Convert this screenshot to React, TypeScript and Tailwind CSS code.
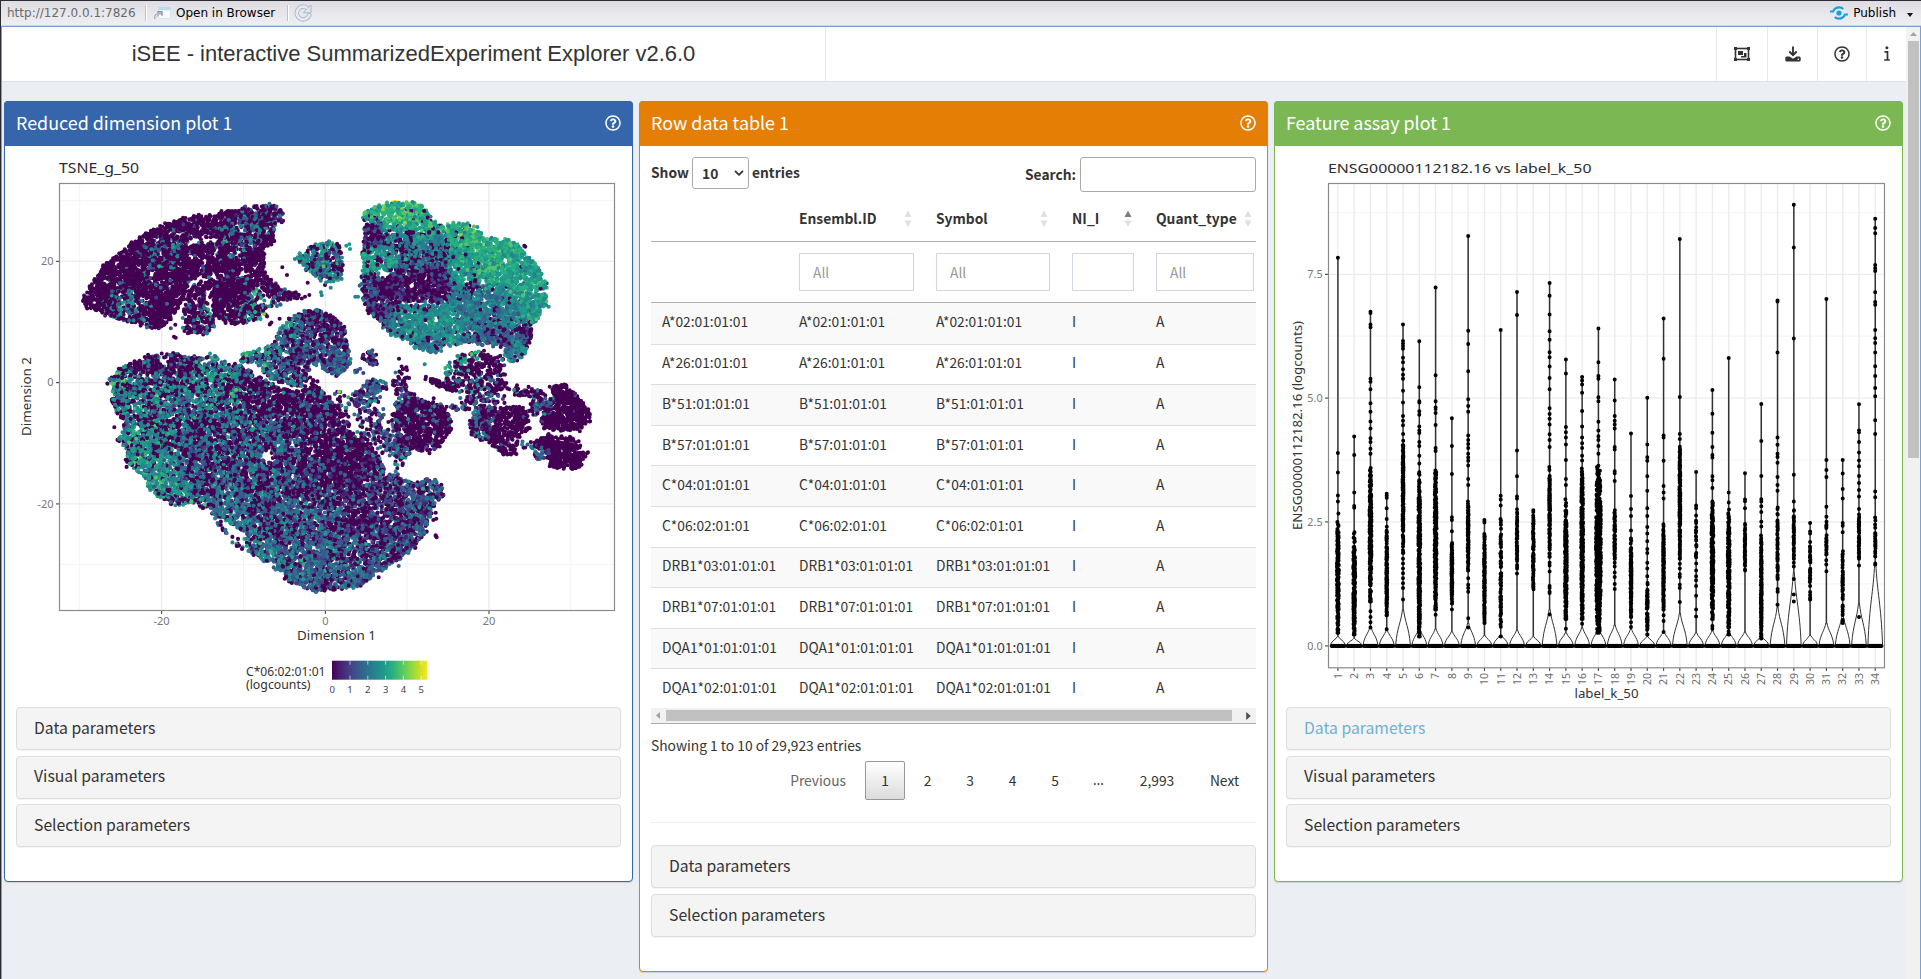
import React from "react";
import { FaRegObjectGroup, FaDownload, FaRegQuestionCircle, FaInfo } from "react-icons/fa";

/* ---------- deterministic random numbers ---------- */
function makeRng(seed: number) {
  let s = seed >>> 0;
  return () => {
    s = (s + 0x6d2b79f5) >>> 0;
    let t = s;
    t = Math.imul(t ^ (t >>> 15), t | 1);
    t ^= t + Math.imul(t ^ (t >>> 7), t | 61);
    return ((t ^ (t >>> 14)) >>> 0) / 4294967296;
  };
}

/* ---------- t-SNE scatter ---------- */
const VIRIDIS = [
  "#440154", "#482173", "#433e85", "#38598c", "#2d708e", "#25858e",
  "#1e9b8a", "#2ab07f", "#52c569", "#86d549", "#c2df23", "#fde725",
];

type Pt = [number, number];
// x, y, radius, share of zero counts, mean of the rest
type Spot = [number, number, number, number, number];
interface Cluster {
  poly: Pt[];
  density: number;
  spots: Spot[];
  holes?: [number, number, number, number][];
  sd?: number;
}

const CLUSTERS: Cluster[] = [
  {
    poly: [[38,330],[62,285],[110,215],[165,180],[230,125],[280,105],[370,77],[430,74],[520,52],[590,47],[628,48],[645,90],[612,100],[612,160],[582,170],[585,210],[580,240],[600,270],[640,300],[685,308],[690,325],[650,330],[600,322],[570,290],[545,290],[545,330],[575,345],[560,385],[520,400],[465,400],[432,370],[415,300],[395,250],[360,268],[345,310],[330,350],[305,390],[255,420],[215,405],[180,395],[135,385],[80,362],[50,355]],
    density: 32,
    spots: [[300,250,150,0.95,1.8],[100,280,60,0.99,1.8],[260,380,40,0.97,1.8],[480,320,45,0.97,1.8],[170,345,40,0.2,2.5],[280,205,40,0.35,2.1],[520,140,42,0.45,2.1],[340,150,34,0.6,2.2],[440,130,30,0.6,2],[555,350,40,0.55,2.7],[490,260,24,0.75,2],[230,270,20,0.6,2.2],[620,70,24,0.45,1.5],[580,100,20,0.6,1.8],[420,60,60,0.99,1],[600,250,80,0.93,1.5]],
    holes: [[405,150,36,9],[350,160,30,7],[495,190,14,9],[245,250,9,12],[210,300,5,12],[530,250,18,6],[430,260,10,8],[330,130,10,6]],
  },
  { poly: [[345,345],[365,290],[400,270],[412,350],[440,395],[425,425],[400,433],[345,425],[335,390]], density: 20, spots: [[380,360,60,0.92,2],[425,420,14,0.4,2.4]] },
  { poly: [[285,405],[340,400],[345,420],[300,418]], density: 7, spots: [[300,410,60,0.6,2]] },
  { poly: [[545,290],[600,320],[640,345],[600,360],[560,400],[530,340]], density: 10, spots: [[580,340,60,0.45,2.7]] },
  { poly: [[560,375],[650,378],[625,410],[575,400]], density: 3, spots: [[600,390,60,0.7,2.4]] },
  { poly: [[675,205],[700,182],[730,165],[775,155],[812,162],[820,225],[815,265],[788,282],[755,270],[725,250],[700,232]], density: 28, spots: [[740,190,50,0.15,2.3],[805,200,25,0.7,1.6],[770,250,40,0.3,2.1],[770,160,20,0.1,3]] },
  { poly: [[620,430],[640,395],[690,367],[740,357],[790,380],[825,415],[835,470],[835,500],[848,515],[820,545],[795,560],[750,530],[720,510],[715,560],[690,590],[640,585],[590,560],[560,515],[505,520],[520,490],[560,480],[610,464]], density: 27, spots: [[660,410,35,0.3,2.5],[740,400,40,0.55,1.4],[800,430,40,0.55,1.3],[700,470,50,0.45,1.6],[790,510,40,0.25,1.6],[560,500,50,0.25,2.7],[640,520,60,0.45,2]], holes: [[565,540,14,12]] },
  {
    poly: [[115,580],[135,542],[200,512],[240,497],[305,490],[365,502],[430,495],[470,520],[520,530],[560,555],[620,590],[690,605],[740,585],[765,615],[800,640],[830,690],[860,740],[900,765],[930,810],[950,850],[1000,862],[1030,880],[1070,870],[1100,872],[1128,915],[1095,940],[1080,980],[1060,1045],[1020,1090],[985,1112],[940,1140],[900,1170],[860,1190],[810,1200],[740,1205],[700,1192],[650,1168],[600,1125],[545,1088],[520,1050],[540,1040],[480,1000],[450,985],[380,940],[300,945],[240,900],[225,860],[165,825],[170,780],[145,750],[165,700],[125,640],[130,610]],
    density: 29,
    spots: [[150,560,50,0.35,3.1],[240,530,60,0.65,2],[330,500,45,0.75,1.8],[200,640,70,0.45,2.4],[220,730,55,0.3,2.8],[380,600,60,0.28,2.6],[330,700,70,0.4,2.2],[190,790,40,0.25,3],[265,840,50,0.12,2.6],[320,920,45,0.2,2.7],[400,840,60,0.55,1.7],[500,720,60,0.4,2],[600,620,50,0.78,1.7],[700,620,60,0.7,1.7],[620,740,70,0.5,1.7],[800,750,70,0.8,1.4],[540,840,60,0.5,1.8],[480,950,50,0.2,2.1],[640,900,60,0.35,1.8],[700,1010,70,0.28,1.8],[580,1010,40,0.3,2],[580,970,25,0.75,1.5],[700,880,40,0.75,1.4],[860,860,50,0.6,1.2],[970,980,55,0.7,1.2],[990,900,60,0.3,1.5],[860,980,50,0.65,1.3],[620,1090,60,0.2,2],[720,1120,60,0.22,1.7],[860,1100,60,0.35,1.6],[860,1165,50,0.2,1.8],[770,1190,25,0.7,1.2],[1040,1050,50,0.3,1.6],[1090,910,40,0.3,1.6]],
    holes: [[595,800,13,16],[430,512,30,6],[590,660,8,5]],
  },
  { poly: [[410,970],[470,985],[480,1040],[550,1060],[540,1090],[500,1070],[465,1030]], density: 5, spots: [[480,1020,80,0.35,2.3]] },
  {
    poly: [[880,68],[915,50],[980,36],[1050,42],[1078,72],[1110,105],[1170,97],[1220,110],[1245,145],[1310,145],[1350,162],[1362,195],[1380,207],[1415,245],[1432,290],[1425,350],[1410,380],[1385,405],[1383,450],[1365,495],[1320,520],[1305,500],[1290,465],[1200,458],[1140,463],[1105,485],[1060,485],[1010,455],[955,430],[930,400],[895,365],[875,320],[870,270],[880,220],[875,190],[885,150],[880,110]],
    density: 31,
    sd: 0.42,
    spots: [[980,80,45,0.03,3.4],[910,130,22,0.65,1],[1000,150,28,0.4,1.9],[1070,120,30,0.08,3],[1110,175,30,0.35,2.1],[1170,140,40,0.05,3.3],[1270,200,60,0.02,3.15],[1190,230,35,0.06,2.9],[1360,280,50,0.02,3],[1370,360,40,0.02,2.8],[930,215,28,0.12,2.9],[1060,210,35,0.4,2.1],[890,300,22,0.35,1.5],[960,300,32,0.75,0.9],[1080,285,38,0.75,0.8],[1210,293,14,0.75,1],[1200,345,45,0.1,2.2],[1280,360,45,0.1,2],[930,370,22,0.45,1.2],[1050,400,40,0.08,2.6],[1000,410,30,0.12,2.4],[1130,400,40,0.05,2.7],[1370,430,20,0.7,1.2],[1290,440,30,0.25,1.6],[1220,430,30,0.2,1.7],[1340,490,22,0.25,2.6],[1080,465,25,0.1,2]],
    holes: [[937,254,22,10],[1040,340,50,6],[1100,390,8,5]],
  },
  { poly: [[1125,520],[1170,492],[1230,480],[1300,500],[1312,560],[1300,620],[1260,615],[1200,610],[1150,600],[1130,570]], density: 17, spots: [[1150,520,24,0.15,2.8],[1200,500,25,0.45,3.2],[1280,560,50,0.85,1.6],[1220,600,40,0.55,2.4],[1210,560,30,0.85,2]] },
  { poly: [[1063,560],[1075,562],[1155,592],[1150,605],[1070,572]], density: 50, spots: [[1100,580,100,1,1]] },
  { poly: [[1170,620],[1300,610],[1320,635],[1200,660],[1180,655]], density: 12, spots: [[1250,630,100,0.7,1.6]] },
  { poly: [[1120,648],[1180,645],[1200,670],[1140,656]], density: 10, spots: [[1250,630,100,0.8,1.6]] },
  { poly: [[1200,680],[1230,650],[1300,655],[1350,648],[1382,690],[1380,725],[1345,740],[1338,790],[1300,798],[1285,780],[1250,752],[1200,738]], density: 26, spots: [[1230,690,35,0.55,1.7],[1330,700,50,0.96,1.5],[1310,770,40,0.97,1]] },
  { poly: [[1442,590],[1485,582],[1520,618],[1560,665],[1562,690],[1530,720],[1480,722],[1420,718],[1412,690],[1425,640],[1455,620]], density: 36, spots: [[1500,670,60,0.99,1],[1430,650,26,0.6,1.8]] },
  { poly: [[1385,765],[1420,735],[1490,740],[1520,750],[1545,795],[1535,825],[1510,838],[1445,835],[1430,812],[1400,805]], density: 36, spots: [[1500,780,60,0.99,1],[1405,790,22,0.5,1.8]] },
  { poly: [[1310,598],[1370,585],[1420,608],[1440,640],[1400,680],[1370,665],[1385,625],[1330,615]], density: 18, spots: [[1360,600,60,0.9,1.6],[1400,660,25,0.4,1.9]] },
  { poly: [[1335,740],[1385,745],[1390,780],[1350,770]], density: 9, spots: [[1360,760,60,0.5,1.8]] },
  { poly: [[975,640],[1010,622],[1060,632],[1110,642],[1138,670],[1143,710],[1125,760],[1080,785],[1020,775],[980,740],[965,700]], density: 28, spots: [[1060,700,60,0.85,1.5],[990,700,30,0.7,1.5]] },
  { poly: [[940,730],[1000,735],[1030,790],[990,812],[950,795]], density: 20, spots: [[980,770,60,0.35,1.4]] },
  { poly: [[975,805],[1000,820],[985,855],[970,850]], density: 5, spots: [[980,830,60,0.6,1.8]] },
  { poly: [[850,610],[900,572],[930,585],[928,630],[880,665],[850,645]], density: 24, spots: [[880,625,60,0.2,1.3]] },
  { poly: [[900,565],[960,575],[970,590],[930,605]], density: 14, spots: [[930,580,60,0.4,1.9]] },
  { poly: [[870,500],[916,475],[925,530],[895,522]], density: 24, spots: [[900,505,60,0.5,1]] },
  { poly: [[845,540],[880,530],[882,560],[860,552]], density: 14, spots: [[870,545,60,0.2,1.4]] },
  { poly: [[965,550],[1000,520],[1032,515],[990,565]], density: 13, spots: [[1000,540,60,0.8,1.4]] },
  { poly: [[965,570],[1020,562],[1005,590],[1050,635],[1000,640],[975,610]], density: 15, spots: [[1000,600,60,0.55,1.5]] },
  { poly: [[870,650],[930,640],[960,720],[950,800],[900,780],[850,720]], density: 9, spots: [[900,720,60,0.5,1.5]] },
  { poly: [[890,690],[935,700],[930,725],[905,720]], density: 16, spots: [[900,700,60,0.2,1.4]] },
  { poly: [[795,590],[850,620],[860,690],[830,690],[790,640]], density: 6, spots: [[830,640,60,0.6,1.7]] },
  { poly: [[690,585],[720,550],[750,560],[740,590]], density: 8, spots: [[720,580,60,0.7,1.5]] },
];

const STRAY: [number, number, number][] = [
  [637,232,0],[651,255,0],[713,278,0],[705,320,0],[753,307,5],[755,316,5],[718,315,0],[312,440,0],[317,443,0],[838,163,6],[840,177,6],[829,167,6],
  [765,285,0],[782,293,5],[856,320,5],[864,320,5],[1436,350,6],[1430,280,2],[1366,170,0],[1363,167,0],[1097,1038,0],[1100,1042,0],[1097,1036,0],
  [1097,968,0],[1099,986,0],[1090,990,0],[1551,790,0],[1554,787,0],[987,506,0],[987,625,0],[1064,523,5],[1091,625,0],[986,1128,3],[926,1162,0],
  [500,1068,0],[516,1077,0],[470,1030,5],[133,712,0],[978,35,11],[972,35,11],[807,605,9],[835,622,7],[983,825,7],[982,835,0],[115,582,10],
];

function inside(p: Pt[], x: number, y: number) {
  let hit = false;
  for (let i = 0, j = p.length - 1; i < p.length; j = i++) {
    const [xi, yi] = p[i];
    const [xj, yj] = p[j];
    if (yi > y !== yj > y && x < ((xj - xi) * (y - yi)) / (yj - yi) + xi) hit = !hit;
  }
  return hit;
}

function buildScatter() {
  const rng = makeRng(2024);
  const gauss = () => (rng() + rng() + rng() + rng() - 2) * 1.73;
  const layers = 24;
  const bins: string[][] = Array.from({ length: layers }, () => VIRIDIS.map(() => ""));
  const put = (ux: number, uy: number, c: number) => {
    const l = Math.floor(rng() * layers);
    bins[l][c] += `M${(70 + ux / 3).toFixed(1)} ${(190 + uy / 3).toFixed(1)}h0`;
  };
  for (const c of CLUSTERS) {
    const xs = c.poly.map((p) => p[0]);
    const ys = c.poly.map((p) => p[1]);
    const x0 = Math.min(...xs), x1 = Math.max(...xs), y0 = Math.min(...ys), y1 = Math.max(...ys);
    const n = Math.round(((x1 - x0) * (y1 - y0) * c.density) / 1000);
    for (let i = 0; i < n; i++) {
      const x = x0 + rng() * (x1 - x0);
      const y = y0 + rng() * (y1 - y0);
      if (!inside(c.poly, x, y)) continue;
      if (c.holes && c.holes.some(([hx, hy, hw, hh]) => ((x - hx) / hw) ** 2 + ((y - hy) / hh) ** 2 < 1.3 && rng() < 0.93)) continue;
      let w = 0, p0 = 0, m = 0;
      for (const [sx, sy, r, sp, sm] of c.spots) {
        const d2 = ((x - sx) ** 2 + (y - sy) ** 2) / (r * r);
        const k = Math.exp(-d2 * 0.9) + 1e-4 / (1 + d2);
        w += k; p0 += k * sp; m += k * sm;
      }
      p0 /= w; m /= w;
      const patch = Math.sin(x / 17 + Math.sin(y / 23) * 2) * Math.sin(y / 14 + Math.sin(x / 19) * 2);
      if (p0 > 0.15 && p0 < 0.93) p0 += patch * 0.16;
      let v = 0;
      if (rng() >= p0) v = Math.max(0.3, m + gauss() * (c.sd ?? 0.6));
      const bin = Math.max(0, Math.min(11, Math.round((v / 5.3) * 11)));
      put(x + gauss() * 2.4, y + gauss() * 2.4, bin);
    }
  }
  STRAY.forEach(([x, y, c]) => put(x, y, c));
  return bins;
}

const SCATTER = buildScatter();
const X1_MINOR = [79.7, 243.5, 407.2, 570.8];
const X1_MAJOR: [number, string][] = [[161.6, "-20"], [325.4, "0"], [489, "20"]];
const Y1_MINOR = [200.7, 321.9, 443, 564.3];
const Y1_MAJOR: [number, string][] = [[261.4, "20"], [382.6, "0"], [503.9, "-20"]];
const LEGEND = [332.3, 350, 367.8, 385.6, 403.4, 421.2];

const plotFont = "font-['Noto_Sans']";

function ReducedDimensionPlot() {
  return (
    <svg className={`block h-[561px] w-[605px] ${plotFont}`} viewBox="16 146 605 561">
      <defs>
        <linearGradient id="viridis">
          {VIRIDIS.map((c, i) => (
            <stop key={c} offset={i / 11} stopColor={c} />
          ))}
        </linearGradient>
      </defs>
      {X1_MINOR.map((x) => <path key={x} d={`M${x} 183V611`} stroke="#f3f3f3" />)}
      {Y1_MINOR.map((y) => <path key={y} d={`M59 ${y}H615`} stroke="#f3f3f3" />)}
      {X1_MAJOR.map(([x]) => <path key={x} d={`M${x} 183V611`} stroke="#ececec" strokeWidth="1.4" />)}
      {Y1_MAJOR.map(([y]) => <path key={y} d={`M59 ${y}H615`} stroke="#ececec" strokeWidth="1.4" />)}
      <g fill="none" strokeLinecap="round" strokeWidth="4.1">
        {SCATTER.map((layer, i) => layer.map((d, j) => (d ? <path key={`${i}-${j}`} d={d} stroke={VIRIDIS[j]} /> : null)))}
      </g>
      <rect x="59.5" y="183.5" width="555" height="427" fill="none" stroke="#8a8a8a" strokeWidth="1.2" />
      <text x="59" y="173" fontSize="13.5" fill="#2b2b2b" textLength="80" lengthAdjust="spacingAndGlyphs">TSNE_g_50</text>
      {X1_MAJOR.map(([x, t]) => (
        <g key={t}>
          <path d={`M${x} 611V614`} stroke="#555" strokeWidth="1.2" />
          <text x={x} y="624.8" fontSize="11" fill="#777" textAnchor="middle">{t}</text>
        </g>
      ))}
      {Y1_MAJOR.map(([y, t]) => (
        <g key={t}>
          <path d={`M56 ${y}H59`} stroke="#555" strokeWidth="1.2" />
          <text x="53.5" y={y + 3.8} fontSize="11" fill="#777" textAnchor="end">{t}</text>
        </g>
      ))}
      <text x="297" y="640" fontSize="12.5" fill="#333" textLength="79" lengthAdjust="spacingAndGlyphs">Dimension 1</text>
      <text transform="translate(31 436) rotate(-90)" fontSize="12.5" fill="#333" textLength="79" lengthAdjust="spacingAndGlyphs">Dimension 2</text>
      <text y="676.3" fontSize="12.2" fill="#333">
        <tspan x="246" textLength="79.5" lengthAdjust="spacingAndGlyphs">C*06:02:01:01</tspan>
        <tspan x="246" dy="13" textLength="64.5" lengthAdjust="spacingAndGlyphs">(logcounts)</tspan>
      </text>
      <rect x="332" y="660.7" width="95.5" height="19" fill="url(#viridis)" />
      {LEGEND.map((x, i) => (
        <g key={x}>
          {i > 0 && <path d={`M${x} 660.7v4M${x} 675.7v4`} stroke="#fff" strokeOpacity="0.6" />}
          <text x={x} y="693" fontSize="9.5" fill="#444" textAnchor="middle">{i}</text>
        </g>
      ))}
    </svg>
  );
}

/* ---------- violin plot ---------- */
interface Violin {
  top: number;
  dots: number[];
  dense: [number, number];
  n: number;
  bulge: number;
}
const v = (top: number, dots: number[], dense: [number, number], n: number, bulge: number): Violin => ({ top, dots, dense, n, bulge });

const VIOLINS: Violin[] = [
  v(431, [933,983,1042,1058], [1085,1395], 170, 1405),
  v(891, [938,1035,1069,1074], [1125,1400], 150, 1410),
  v(570, [573,603,610,742,750,769,805,827,852,870,895,905,922,935,1340,1355,1368,1382], [945,1315], 200, 1380),
  v(1038, [1043,1048,1075,1103,1386], [1120,1350], 110, 1388),
  v(603, [645,652,658,665,688,700,718,732,742,773,803,838,850,862,1205,1217,1230,1242,1255,1268,1280,1310], [880,1190], 130, 1335),
  v(646, [764,800,803,826,835,865,875,882,905,915,940,960], [975,1405], 230, 1385),
  v(508, [733,800,816,820,830,861,920,928,1349], [955,1335], 210, 1385),
  v(844, [915,987,1098,1105,1134,1335], [1150,1320], 90, 1392),
  v(375, [619,653,723,795,812,827,888,900,910,920,935,945,953,965,1000,1015,1255,1272,1280,1290,1358,1382], [1050,1235], 90, 1370),
  v(1105, [1108,1112], [1120,1370], 90, 1402),
  v(617, [1043,1053,1068], [1080,1405], 75, 1400),
  v(519, [578,927,993,1045,1050,1243], [1070,1230], 55, 1388),
  v(1080, [1085], [1090,1285], 80, 1405),
  v(496, [529,577,620,642,674,687,711,740,769,818,833,845,860,885,900,918,1215,1222,1238,1275,1280,1290,1293,1348], [960,1200], 110, 1335),
  v(693, [729,866,880,893,911,951,1000,1015,1385], [1045,1360], 170, 1395),
  v(738, [747,757,778,825,865,893,908,920,940,952,1372], [960,1360], 200, 1382),
  v(613, [700,735,742,790,800,853,875,890,900,915,935], [945,1395], 360, 1385),
  v(744, [798,838,850,860,870,918,924,980,985,1005,1215,1225,1240,1252,1270,1283], [1075,1205], 75, 1375),
  v(883, [1044,1077,1095,1132,1368,1380], [1140,1355], 100, 1385),
  v(791, [911,944,953,993,1030,1075,1095,1123,1140,1160,1180,1190,1215,1230,1250], [1260,1400], 80, 1405),
  v(587, [691,888,893,953,1018,1035,1050,1350,1365,1393], [1105,1335], 120, 1392),
  v(383, [789,884,897,1218,1230,1245,1252,1272,1280,1316], [905,1205], 130, 1345),
  v(982, [1068,1075,1235,1250,1260,1275,1300,1335,1353], [1090,1220], 24, 1395),
  v(771, [832,881,918,938,945,993,1003,1023,1378,1385], [1040,1360], 170, 1390),
  v(689, [1035,1060], [1075,1400], 150, 1393),
  v(985, [1053,1057,1075], [1095,1235], 65, 1393),
  v(807, [902,992,1052,1058,1070,1085,1110,1122], [1135,1410], 140, 1405),
  v(541, [544,675,893,912,935,943,958,995,1015,1030,1323], [1040,1290], 60, 1330),
  v(295, [405,639,989,1058,1215,1225,1257,1297,1315], [1065,1205], 45, 1240),
  v(1113, [1135,1140,1162], [1165,1310], 45, 1402),
  v(537, [951,977,995,1071,1097,1237], [1100,1220], 30, 1370),
  v(951, [986,1026,1050,1113,1120,1137], [1160,1370], 60, 1350),
  v(808, [875,880,905,932,952,967,992,1010,1028,1045,1222,1355], [1055,1205], 50, 1320),
  v(331, [355,368,450,458,465,520,545,552,617,638,650,675,710,735,766,787,849,884,1032,1047], [1070,1220], 32, 1215),
];

const cy = (y: number) => 90 + y / 2.5705;
const cx = (i: number) => 1337.9 + i * 16.283;
const BASE = 645.9;

function buildViolins() {
  const rng = makeRng(77);
  let dots = "";
  let wide = "";
  VIOLINS.forEach((w, i) => {
    const x = cx(i);
    [w.top, ...w.dots].forEach((y) => {
      dots += `M${x.toFixed(1)} ${cy(y).toFixed(1)}h0`;
    });
    const spread = w.n > 300 ? 2.6 : w.n > 140 ? 1 : w.n > 70 ? 0.5 : 0.3;
    const count = w.n > 85 ? w.n * 1.6 : w.n;
    for (let k = 0; k < count; k++) {
      const t = (rng() + rng() * 0.55) / 1.55;
      // flip so that low values are the crowded end
      const u = 1 - Math.pow(1 - t, 0.85);
      const y = w.dense[0] + (w.dense[1] - w.dense[0]) * Math.min(1, u * 1.22);
      const bell = Math.sin(Math.PI * (0.15 + 0.7 * Math.min(1, u * 1.2)));
      const dx = (rng() - 0.5) * 2 * spread * bell;
      wide += `M${(x + dx).toFixed(1)} ${cy(y).toFixed(1)}h0`;
    }
  });
  return dots + wide;
}
const VIOLIN_DOTS = buildViolins();
const Y2: [number, string][] = [[645.9, "0.0"], [521.9, "2.5"], [398.1, "5.0"], [274.4, "7.5"]];

function violinPath(i: number, bulge: number) {
  const x = cx(i);
  const t = cy(bulge);
  const b = BASE - 1.5;
  const h = b - t;
  return `M${x - 7.3} ${b}C${x - 5.8} ${b - h * 0.5} ${x - 2} ${b - h * 0.62} ${x - 0.5} ${t}H${x + 0.5}C${x + 2} ${b - h * 0.62} ${x + 5.8} ${b - h * 0.5} ${x + 7.3} ${b}Z`;
}

function FeatureAssayPlot() {
  return (
    <svg className={`block h-[561px] w-[605px] ${plotFont}`} viewBox="1286 146 605 561">
      {[212.6, 336.2, 460, 583.9].map((y) => <path key={y} d={`M1328 ${y}H1884`} stroke="#f3f3f3" />)}
      {Y2.map(([y]) => <path key={y} d={`M1328 ${y}H1884`} stroke="#ececec" strokeWidth="1.4" />)}
      {VIOLINS.map((_, i) => <path key={i} d={`M${cx(i)} 183V668`} stroke="#ececec" strokeWidth="1.4" />)}
      {VIOLINS.map((w, i) => (
        <g key={i} stroke="#333">
          <path d={`M${cx(i)} ${cy(w.top)}V${cy(w.bulge) + 1}`} strokeWidth="1.5" />
          <path d={violinPath(i, w.bulge)} fill="#fff" strokeWidth="1" />
          <path d={`M${cx(i) - 6.2} ${BASE}h12.4`} stroke="#000" strokeWidth="4" strokeLinecap="round" />
        </g>
      ))}
      <path d={`M1332 ${BASE}H1881`} stroke="#000" strokeWidth="3" />
      <path d={VIOLIN_DOTS} fill="none" stroke="#000" strokeWidth="4" strokeLinecap="round" />
      <rect x="1328.5" y="183.5" width="556" height="484.3" fill="none" stroke="#8a8a8a" strokeWidth="1.2" />
      <text x="1328" y="173" fontSize="13.3" fill="#2b2b2b" textLength="263.5" lengthAdjust="spacingAndGlyphs">ENSG00000112182.16 vs label_k_50</text>
      {Y2.map(([y, t]) => (
        <g key={t}>
          <path d={`M1325 ${y}H1328`} stroke="#555" strokeWidth="1.2" />
          <text x="1322.6" y={y + 3.8} fontSize="10.8" fill="#777" textAnchor="end">{t}</text>
        </g>
      ))}
      {VIOLINS.map((_, i) => (
        <g key={i}>
          <path d={`M${cx(i)} 668V671`} stroke="#555" strokeWidth="1.2" />
          <text transform={`translate(${cx(i) + 3.8} 673) rotate(-90)`} fontSize="10.5" fill="#6b6b6b" textAnchor="end">{i + 1}</text>
        </g>
      ))}
      <text transform="translate(1301.5 530) rotate(-90)" fontSize="12.5" fill="#333" textLength="209" lengthAdjust="spacingAndGlyphs">ENSG00000112182.16 (logcounts)</text>
      <text x="1574.5" y="697.8" fontSize="12.5" fill="#333" textLength="64" lengthAdjust="spacingAndGlyphs">label_k_50</text>
    </svg>
  );
}

/* ---------- panels ---------- */
function Panel({ title, frame, head, height, children }: { title: string; frame: string; head: string; height: string; children: React.ReactNode }) {
  return (
    <section className={`w-[629px] shrink-0 rounded-[4px] border bg-white shadow-[0_1px_1px_rgba(0,0,0,0.12)] ${frame} ${height}`}>
      <header className={`-mx-px -mt-px flex h-[45px] items-center justify-between rounded-t-[4px] px-[12px] text-white ${head}`}>
        <h3 className="pb-[4px] text-[17.9px] leading-[22px]">{title}</h3>
        <FaRegQuestionCircle className="mb-px size-4" />
      </header>
      <div className="px-[11px]">{children}</div>
    </section>
  );
}

function Collapsible({ label, active }: { label: string; active?: boolean }) {
  return (
    <div className={`flex h-[43px] items-center rounded-[4px] border border-[#dddddd] bg-[#f4f4f4] pb-[2px] pl-[17px] text-[15.75px] leading-5 shadow-[0_1px_1px_rgba(0,0,0,0.05)] ${active ? "text-[#72afd2]" : "text-[#333]"}`}>
      {label}
    </div>
  );
}

const ALLELES = [
  "A*02:01:01:01", "A*26:01:01:01", "B*51:01:01:01", "B*57:01:01:01", "C*04:01:01:01",
  "C*06:02:01:01", "DRB1*03:01:01:01", "DRB1*07:01:01:01", "DQA1*01:01:01:01", "DQA1*02:01:01:01",
];

function Sorter({ up }: { up?: boolean }) {
  return (
    <svg className="h-[18px] w-[8px]" viewBox="0 0 8 18">
      <path d="M4 .5L7.5 7H.5z" fill={up ? "#7f7f7f" : "#e0e0e0"} />
      <path d="M4 17L7.5 10.5H.5z" fill="#e0e0e0" />
    </svg>
  );
}

const COLS = "grid grid-cols-[148px_137px_136px_84px_100px]";

function HeadCell({ label, up, pad = "pr-[24px]" }: { label: string; up?: boolean; pad?: string }) {
  return (
    <div className={`flex items-center justify-between ${pad}`}>
      <span className="pb-[2px] text-[13.8px] font-bold leading-5">{label}</span>
      <Sorter up={up} />
    </div>
  );
}

function FilterBox({ text, width }: { text: string; width: string }) {
  return <div className={`flex h-[38px] items-center border border-[#d2d6de] pb-px pl-[13px] text-[13.8px] leading-5 text-[#999] ${width}`}>{text}</div>;
}

function PageLink({ label, width }: { label: string; width: string }) {
  return <span className={`text-center ${width}`}>{label}</span>;
}

function RowDataTable() {
  return (
    <div className="text-[13.8px] leading-5 text-[#333]">
      <div className="flex h-[57px] items-start justify-between pt-[11px] font-bold">
        <div className="flex items-center">
          <span className="w-[41px] pb-[2px]">Show</span>
          <span className="flex h-[32px] w-[57px] items-center justify-between rounded-[3px] border border-[#aaa] pl-[9px] pr-[4px]">
            <span className="pb-px">10</span>
            <svg className="h-[6px] w-[10px]" viewBox="0 0 10 6"><path d="M1 .8l4 4 4-4" fill="none" stroke="#333" strokeWidth="1.8" /></svg>
          </span>
          <span className="pb-[2px] pl-[3px]">entries</span>
        </div>
        <div className="flex items-center gap-[4px]">
          <span className="pb-px">Search:</span>
          <span className="h-[35px] w-[176px] rounded-[3px] border border-[#aaa]" />
        </div>
      </div>
      <div className={`h-[39px] border-b border-[#b0b0b0] pb-[6px] ${COLS}`}>
        <div />
        <HeadCell label="Ensembl.ID" />
        <HeadCell label="Symbol" />
        <HeadCell label="NI_I" up />
        <HeadCell label="Quant_type" pad="pr-[4px]" />
      </div>
      <div className={`h-[61px] items-center border-b border-[#b0b0b0] ${COLS}`}>
        <div />
        <FilterBox text="All" width="w-[115px]" />
        <FilterBox text="All" width="w-[114px]" />
        <FilterBox text="" width="w-[62px]" />
        <FilterBox text="All" width="w-[98px]" />
      </div>
      <div className="h-[405px] overflow-hidden">
        {ALLELES.map((a, i) => (
          <div key={a} className={`h-[40.6px] items-center pb-[4px] ${COLS} ${i > 0 ? "border-t border-[#dddddd]" : ""} ${i % 2 === 0 ? "bg-[#f9f9f9]" : ""}`}>
            <span className="pl-[11px]">{a}</span>
            <span>{a}</span>
            <span>{a}</span>
            <span>I</span>
            <span>A</span>
          </div>
        ))}
      </div>
      <div className="flex h-[16px] items-center justify-between border-b border-[#aaa] bg-[#f1f1f1] px-[5px]">
        <svg className="h-[7px] w-[4px]" viewBox="0 0 4 7"><path d="M4 0v7L0 3.5z" fill="#a3a3a3" /></svg>
        <span className="ml-[6px] mr-auto h-[11px] w-[566px] bg-[#c1c1c1]" />
        <svg className="h-[8px] w-[5px]" viewBox="0 0 4 7"><path d="M0 0v7l4-3.5z" fill="#505050" /></svg>
      </div>
      <p className="h-[37px] pt-[11px]">Showing 1 to 10 of 29,923 entries</p>
      <div className="flex h-[39px] items-center justify-end">
        <span className="mr-[19px] pb-[2px] text-[#666]">Previous</span>
        <span className="flex h-[39px] w-[40px] items-center justify-center rounded-[2px] border border-[#979797] bg-gradient-to-b from-white to-[#dcdcdc] pb-[2px]">1</span>
        <span className="ml-[1px] flex pb-[2px]">
          <PageLink label="2" width="w-[43px]" />
          <PageLink label="3" width="w-[42px]" />
          <PageLink label="4" width="w-[43px]" />
          <PageLink label="5" width="w-[42px]" />
          <PageLink label="…" width="w-[45px] font-['Noto_Sans']" />
          <PageLink label="2,993" width="w-[72px]" />
          <PageLink label="Next" width="w-[63px]" />
        </span>
      </div>
      <hr className="mt-[22px] border-[#eeeeee]" />
      <div className="mt-[22px] flex flex-col gap-[6px]">
        <Collapsible label="Data parameters" />
        <Collapsible label="Selection parameters" />
      </div>
    </div>
  );
}

function HeaderButton({ width, children }: { width: string; children: React.ReactNode }) {
  return <div className={`flex items-center justify-center border-l border-[#e9e9e9] pb-px text-[#333] ${width}`}>{children}</div>;
}

export default function App() {
  return (
    <div className="flex h-[979px] w-[1921px] flex-col overflow-hidden border-l border-t border-[#2a2a33] bg-[#ebeef3] font-['Noto_Sans_CJK_SC',sans-serif]">
      <div className="flex h-[25px] shrink-0 items-center border-b border-[#d3d3da] bg-gradient-to-b from-[#dfdde3] to-[#eeeff3] font-['DejaVu_Sans'] text-[12px] leading-4 text-black">
        <span className="w-[137px] shrink-0 pl-[6px] text-[#6b6b6b]">http://127.0.0.1:7826</span>
        <span className="w-[7px] shrink-0" />
        <span className="h-[16px] w-[2px] border-l border-[#c0c0c4] bg-white" />
        <svg className="ml-[7px] mr-[5px] h-[14px] w-[17px]" viewBox="0 0 17 14">
          <rect x="4.5" y="1" width="12" height="11.5" rx="1" fill="#f4f9fc" stroke="#d8e3ea" />
          <rect x="4.5" y="1" width="12" height="3.2" fill="#b9dcf0" />
          <path d="M.8 13V10.500q0-2.500 2.500-2.500H4V5.500L8 9v-3.500H3.500M8 5.500V10M8 5.500L3 10.500" fill="none" stroke="#8a97a3" strokeWidth="1" />
        </svg>
        <span className="w-[111px]">Open in Browser</span>
        <span className="h-[16px] w-[2px] border-l border-[#c0c0c4] bg-white" />
        <svg className="ml-[5px] h-[18px] w-[18px]" viewBox="0 0 18 18">
          <path d="M12.600 3.600A6.400 6.400 0 1 0 15.300 11" fill="none" stroke="#a9b7c8" strokeWidth="4.400" strokeLinecap="round" />
          <path d="M9 8.800H17V1z" fill="#dfe7ef" stroke="#a9b7c8" strokeLinejoin="round" />
          <path d="M12.600 3.600A6.400 6.400 0 1 0 15.300 11" fill="none" stroke="#e3eaf2" strokeWidth="2.600" strokeLinecap="round" />
        </svg>
        <svg className="ml-auto h-[14px] w-[18px]" viewBox="0 0 18 14">
          <circle cx="9" cy="7" r="2.600" fill="#1b9de2" />
          <path d="M0 5.500H3Q4.800 1.400 9.200 1.400Q11.700 1.400 13.200 3" fill="none" stroke="#1b9de2" strokeWidth="2.200" />
          <path d="M18 8.500H15Q13.200 12.600 8.800 12.600Q6.300 12.600 4.800 11" fill="none" stroke="#1b9de2" strokeWidth="2.200" />
        </svg>
        <span className="ml-[5px]">Publish</span>
        <svg className="ml-[11px] mr-[8px] mt-[3px] h-[4px] w-[6px]" viewBox="0 0 6 4"><path d="M0 0h6L3 4z" fill="#111" /></svg>
      </div>
      <div className="flex min-h-0 grow border-x border-t border-[#7d9fd6]">
        <div className="flex min-w-0 grow flex-col">
          <div className="flex h-[55px] shrink-0 border-b border-[#dde1e8] bg-white">
            <h1 className="flex w-[824px] items-center justify-center border-r border-[#e9e9e9] pb-[2px] font-['Liberation_Sans'] text-[22px] text-[#333]">
              iSEE - interactive SummarizedExperiment Explorer v2.6.0
            </h1>
            <div className="ml-auto flex">
              <HeaderButton width="w-[51px]">
                <svg className="h-[14px] w-[16px]" viewBox="0 0 16 14">
                  <rect x="1.500" y="1.500" width="13" height="11" fill="none" stroke="currentColor" strokeWidth="1.600" />
                  <path d="M0 0h3v3H0zM13 0h3v3h-3zM0 11h3v3H0zM13 11h3v3h-3z" fill="currentColor" />
                  <path d="M4 4h5v4H4z" fill="currentColor" />
                  <path d="M10 6h2.500v4.500H7V9h3z" fill="currentColor" />
                </svg>
              </HeaderButton>
              <HeaderButton width="w-[50px]"><FaDownload className="hidden" />
                <svg className="h-[16px] w-[16px]" viewBox="0 0 16 16">
                  <path d="M8 .5v8M4.300 5.500L8 9.200l3.700-3.700" fill="none" stroke="currentColor" strokeWidth="1.900" />
                  <path d="M1.800 10.500h2.700L8 12.800l3.500-2.300h2.700q1.500 0 1.500 1.500v2q0 1.500-1.500 1.500H1.800Q.3 15.500.3 14v-2q0-1.500 1.500-1.500z" fill="currentColor" />
                  <circle cx="13.300" cy="13.200" r=".8" fill="#fff" />
                </svg>
              </HeaderButton>
              <HeaderButton width="w-[49px]"><FaRegQuestionCircle className="size-[16px]" /></HeaderButton>
              <HeaderButton width="w-[40px]">
                <svg className="h-[15px] w-[6px]" viewBox="0 0 6 15">
                  <circle cx="2.900" cy="1.800" r="1.500" fill="currentColor" />
                  <path d="M.5 5.900h3v7.600M.2 14h5.600" fill="none" stroke="currentColor" strokeWidth="1.700" />
                </svg>
              </HeaderButton>
            </div>
          </div>
          <main className="flex items-start gap-[6px] pl-[2px] pt-[19px]">
            <Panel title="Reduced dimension plot 1" frame="border-[#3565aa]" head="bg-[#3565aa]" height="h-[781px]">
              <ReducedDimensionPlot />
              <div className="flex flex-col gap-[5.500px]">
                <Collapsible label="Data parameters" />
                <Collapsible label="Visual parameters" />
                <Collapsible label="Selection parameters" />
              </div>
            </Panel>
            <Panel title="Row data table 1" frame="border-[#e47e04]" head="bg-[#e47e04]" height="h-[871px]">
              <RowDataTable />
            </Panel>
            <Panel title="Feature assay plot 1" frame="border-[#7bb854]" head="bg-[#7bb854]" height="h-[781px]">
              <FeatureAssayPlot />
              <div className="flex flex-col gap-[5.500px]">
                <Collapsible label="Data parameters" active />
                <Collapsible label="Visual parameters" />
                <Collapsible label="Selection parameters" />
              </div>
            </Panel>
          </main>
        </div>
        <div className="flex w-[14px] shrink-0 flex-col items-center bg-[#f1f1f1] pt-[5px]">
          <svg className="h-[4px] w-[7px]" viewBox="0 0 7 4"><path d="M0 4h7L3.500 0z" fill="#a3a3a3" /></svg>
          <span className="mt-[5px] h-[417px] w-[11px] bg-[#c1c1c1]" />
        </div>
      </div>
    </div>
  );
}
